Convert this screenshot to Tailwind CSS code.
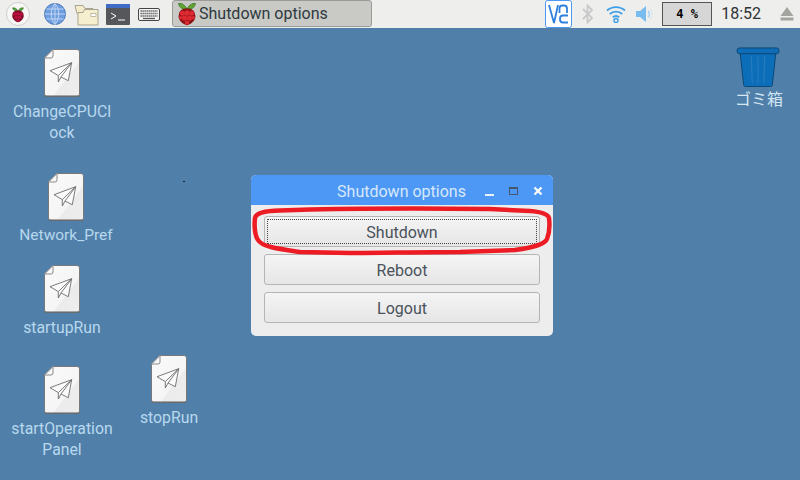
<!DOCTYPE html>
<html lang="ja">
<head>
    <meta charset="UTF-8">
    <title>Shutdown options</title>
    <script src="https://cdn.jsdelivr.net/npm/@tailwindcss/browser@4"></script>
</head>
<body class="w-[800px] h-[480px] overflow-hidden flex flex-col bg-[#5080aa] font-['Roboto','Noto_Sans_CJK_JP',sans-serif]">
    <!-- hidden symbols -->
    <svg width="0" height="0" class="absolute">
        <defs>
            <linearGradient id="pageFill" x1="0" y1="0" x2="1" y2="1">
                <stop offset="0" stop-color="#fafafa"/>
                <stop offset="0.62" stop-color="#f5f5f5"/>
                <stop offset="0.63" stop-color="#ebebeb"/>
                <stop offset="1" stop-color="#eeeeee"/>
            </linearGradient>
            <symbol id="script-icon" viewBox="0 0 36 48">
                <path d="M9 .5H33a2.500 2.500 0 0 1 2.500 2.500V45a2.500 2.500 0 0 1-2.500 2.500H3A2.500 2.500 0 0 1 .5 45V9Z" fill="url(#pageFill)" stroke="#77797b"/>
                <path d="M.5 47h35" stroke="#5c5e60" stroke-width="1"/>
                <path d="M.5 9H7a2 2 0 0 0 2-2V.5Z" fill="#f7f7f7" stroke="#8a8a8a"/>
                <path d="M6 21.700 27.700 13.700 24.300 31.700 17 28 14.300 33 14.300 26.600Z M14.300 26.600 27.700 13.700 17 28" fill="#fbfbfb" stroke="#6c6c6c" stroke-width=".9" stroke-linejoin="round"/>
            </symbol>
            <symbol id="raspberry" viewBox="0 0 20 24">
                <path d="M10 7C8 3 5 1 1.500 1.500 2.500 6 6 8 10 7Z M10 7C12 3 15 1 18.500 1.500 17.500 6 14 8 10 7Z" fill="#5fa52f" stroke="#2c6a17" stroke-width=".7"/>
                <path d="M10 6.500C14 6 18 8.500 18 12.500 19.500 15.500 17 20 13 22 11 23.500 9 23.500 7 22 3 20 .5 15.500 2 12.500 2 8.500 6 6 10 6.500Z" fill="#8e1218"/>
                <g fill="#dc2a30"><circle cx="10" cy="11" r="2.700"/><circle cx="5.300" cy="11.200" r="2.500"/><circle cx="14.700" cy="11.200" r="2.500"/><circle cx="7.500" cy="16" r="2.600"/><circle cx="12.500" cy="16" r="2.600"/><circle cx="10" cy="20.700" r="2.100"/><circle cx="3.700" cy="15.800" r="1.700"/><circle cx="16.300" cy="15.800" r="1.700"/></g>
            </symbol>
            <symbol id="raspberry-dark" viewBox="0 0 20 24">
                <path d="M10 7C8 3 5 1.500 2 2.500 3 6 6 8 10 7Z M10 7C12 3 15 1.500 18 2.500 17 6 14 8 10 7Z" fill="#4f9a3a" stroke="#2f6b18" stroke-width=".6"/>
                <path d="M10 6.500C14 6 18 8.500 18 12.500 19 15.500 17 20 13 22 11 23.500 9 23.500 7 22 3 20 1 15.500 2 12.500 2 8.500 6 6 10 6.500Z" fill="#7f0d2c"/>
                <g fill="#b8123c"><circle cx="10" cy="11" r="2.600"/><circle cx="5.500" cy="11.500" r="2.400"/><circle cx="14.500" cy="11.500" r="2.400"/><circle cx="7.500" cy="16" r="2.500"/><circle cx="12.500" cy="16" r="2.500"/><circle cx="10" cy="20.500" r="2"/></g>
            </symbol>
        </defs>
    </svg>

    <!-- panel -->
    <header class="h-[28px] shrink-0 bg-[#eeeeec] flex items-center text-[#2e3436]">
        <div class="flex items-center w-[172px] shrink-0">
            <div class="ml-[6px] w-[24px] h-[24px] rounded-full bg-[#f7f7f5] border border-[#cfcfcf] flex items-center justify-center">
                <svg width="14" height="17" class="block"><use href="#raspberry-dark"/></svg>
            </div>
            <svg class="ml-[14px] block" width="22" height="22" viewBox="0 0 22 22">
                <circle cx="11" cy="11" r="10.500" fill="#6f9fe0" stroke="#4a78b8"/>
                <path d="M.5 11H21.500M2.500 6H19.500M2.500 16H19.500M11 .5V21.500M11 .5C6 6 6 16 11 21.500M11 .5C16 6 16 16 11 21.500" fill="none" stroke="#cfe0f6" stroke-width=".8"/>
            </svg>
            <svg class="ml-[8px] block" width="25" height="23" viewBox="0 0 25 23">
                <path d="M1 2.500h8l2 3h8v5H3Z" fill="#f4ecca" stroke="#a9a48f"/>
                <path d="M4 9.500h5l1.500-3H24V22H4Z" fill="#f6efcf" stroke="#a9a48f"/>
                <rect x="17" y="10.500" width="5" height="3" fill="#fff" stroke="#a9a48f" stroke-width=".7"/>
            </svg>
            <svg class="ml-[7px] block" width="24" height="21" viewBox="0 0 24 21">
                <rect width="24" height="21" rx="1" fill="#55575a"/>
                <rect width="24" height="4" fill="#3f6cc4"/>
                <path d="M5 9l5 3-5 3" fill="none" stroke="#fff"/>
                <path d="M12 16h7" stroke="#fff"/>
            </svg>
            <svg class="ml-[8px] block" width="22" height="13" viewBox="0 0 22 13">
                <rect x=".5" y=".5" width="21" height="12" rx="1.500" fill="#f3f3f3" stroke="#444"/>
                <path d="M2.500 3h17M2.500 5.500h17M2.500 8h17" stroke="#555" stroke-width="1.300" stroke-dasharray="1.300 .7"/>
                <path d="M5 10.500h12" stroke="#555" stroke-width="1.300"/>
            </svg>
        </div>
        <div class="w-[200px] h-[27px] mt-[-1px] flex items-center rounded-[3px] border border-[#9a9a96] bg-[#c9c9c5] text-[16px] text-[#2e3a40]">
            <svg width="20" height="24" class="ml-[4px] block shrink-0"><use href="#raspberry"/></svg>
            <span class="ml-[2px] whitespace-nowrap">Shutdown options</span>
        </div>
        <div class="ml-auto flex items-center">
            <svg class="block" width="28" height="28" viewBox="0 0 28 28">
                <rect x=".5" y=".5" width="26" height="27" rx="2" fill="#fff" stroke="#4d98f5"/>
                <path d="M4 5l5 18 4-18" fill="none" stroke="#2f7fe0" stroke-width="1.800"/>
                <path d="M14.500 13V8.500a3 3 0 0 1 3-3h1.500a3 3 0 0 1 3 3V13" fill="none" stroke="#2f7fe0" stroke-width="1.800"/>
                <path d="M23 15.500h-5a3 3 0 0 0-3 3v1a3 3 0 0 0 3 3h5" fill="none" stroke="#2f7fe0" stroke-width="1.800"/>
            </svg>
            <svg class="ml-[9px] block" width="12" height="20" viewBox="0 0 12 20">
                <path d="M1 5l9 9-4.500 4.500V1.500L10 6 1 15" fill="none" stroke="#c9c9c9" stroke-width="1.800"/>
            </svg>
            <svg class="ml-[12px] block mt-[-1px]" width="20" height="18" viewBox="0 0 20 18">
                <path d="M1 5.500a13.500 13.500 0 0 1 18 0M3.800 9a9.500 9.500 0 0 1 12.400 0M6.800 12.300a5 5 0 0 1 6.400 0" fill="none" stroke="#3f9fe8" stroke-width="1.800"/>
                <circle cx="10" cy="15.500" r="2" fill="none" stroke="#3f9fe8" stroke-width="1.500"/>
            </svg>
            <svg class="ml-[10px] block" width="18" height="16" viewBox="0 0 18 16">
                <path d="M0 5h4l6-5v16l-6-5H0Z" fill="#79bcf0"/>
                <path d="M12 5a4 4 0 0 1 0 6" fill="none" stroke="#9bcdf3" stroke-width="1.200"/>
                <path d="M14 3a7 7 0 0 1 0 10" fill="none" stroke="#dbe6ee" stroke-width="1.200"/>
            </svg>
            <div class="ml-[8px] w-[50px] h-[24px] border border-[#555] bg-[#d6d6d6] flex items-center justify-center text-[12px] font-['DejaVu_Sans_Mono',monospace] text-black whitespace-pre font-bold">4 %</div>
            <span class="ml-[9px] text-[16px] text-[#2e3436]">18:52</span>
            <svg class="ml-[19px] mr-[6px] block" width="14" height="14" viewBox="0 0 14 14">
                <path d="M7 0l6.500 9H.500Z" fill="#a3a39f"/>
                <rect x=".5" y="10.500" width="13" height="3" fill="#a3a39f"/>
            </svg>
        </div>
    </header>

    <!-- desktop -->
    <main class="relative flex-1">
        <div class="absolute left-[2px] top-[21px] w-[120px] flex flex-col items-center text-center">
            <svg width="36" height="48" class="block"><use href="#script-icon"/></svg>
            <p class="mt-[4px] text-[15.800px] leading-[21px] text-[#b8d8ee] [overflow-wrap:anywhere] w-[104px]">ChangeCPUClock</p>
        </div>
        <div class="absolute left-[6px] top-[145px] w-[120px] flex flex-col items-center text-center">
            <svg width="36" height="48" class="block"><use href="#script-icon"/></svg>
            <p class="mt-[4px] text-[15.500px] leading-[21px] text-[#b8d8ee]">Network_Pref</p>
        </div>
        <div class="absolute left-[2px] top-[237px] w-[120px] flex flex-col items-center text-center">
            <svg width="36" height="48" class="block"><use href="#script-icon"/></svg>
            <p class="mt-[4px] text-[15.800px] leading-[21px] text-[#b8d8ee]">startupRun</p>
        </div>
        <div class="absolute left-[2px] top-[338px] w-[120px] flex flex-col items-center text-center">
            <svg width="36" height="48" class="block"><use href="#script-icon"/></svg>
            <p class="mt-[4px] text-[15.800px] leading-[21px] text-[#b8d8ee] w-[104px]">startOperation Panel</p>
        </div>
        <div class="absolute left-[109px] top-[327px] w-[120px] flex flex-col items-center text-center">
            <svg width="36" height="48" class="block"><use href="#script-icon"/></svg>
            <p class="mt-[4px] text-[15.800px] leading-[21px] text-[#b8d8ee]">stopRun</p>
        </div>
        <div class="absolute left-[729px] top-[19px] w-[60px] flex flex-col items-center text-center">
            <svg class="block mr-[2px]" width="44" height="40" viewBox="0 0 46 42">
                <path d="M4 4H42L38 40a2 2 0 0 1-2 1.500H10A2 2 0 0 1 8 40Z" fill="#0c6db9" stroke="#0b4674"/>
                <path d="M16 10l1 28M23 10v28M30 10l-1 28" stroke="#2a80c2" fill="none"/>
                <rect x="1" y="1" width="44" height="6" rx="2.500" fill="#0f6cb6" stroke="#0b4674"/>
            </svg>
            <p class="mt-[3px] text-[16px] leading-[20px] text-[#d4e6f2] whitespace-nowrap">ゴミ箱</p>
        </div>
        <span class="absolute left-[183px] top-[153px] w-[2px] h-[1px] bg-[#222]"></span>

        <!-- window -->
        <section class="absolute left-[251px] top-[147px] w-[302px] h-[161px] rounded-[5px] overflow-hidden bg-[#ededed] flex flex-col">
            <div class="relative h-[30px] shrink-0 bg-[#4d98f5] flex items-center justify-center pr-[1px] pt-[3px] text-[16px] text-[#d8e8fb]">
                <span>Shutdown options</span>
                <div class="absolute right-[10px] top-[0px] h-[30px] flex items-center gap-[13px]">
                    <span class="w-[9px] h-[2px] mt-[10px] mr-[2px] bg-[#e8f2fd]"></span>
                    <span class="w-[9px] h-[8px] mt-[2px] mr-[2px] border border-[#45566e] border-t-2"></span>
                    <svg width="10" height="10" viewBox="0 0 10 10" class="block mt-[2px]"><path d="M1.500 1.500l7 7M8.500 1.500l-7 7" stroke="#fff" stroke-width="2.200"/></svg>
                </div>
            </div>
            <div class="flex flex-col gap-[7px] pt-[11px] px-[13px]">
                <button class="relative h-[31px] pt-[2px] rounded-[3px] border border-[#b5b5b3] bg-gradient-to-b from-[#f4f4f4] to-[#e6e6e6] text-[16px] text-[#4a525b]">
                    <span class="absolute inset-[2px] border border-dotted border-[#444]"></span>
                    Shutdown
                </button>
                <button class="h-[31px] pt-[2px] rounded-[3px] border border-[#b5b5b3] bg-gradient-to-b from-[#f4f4f4] to-[#e6e6e6] text-[16px] text-[#4a525b]">Reboot</button>
                <button class="h-[31px] pt-[2px] rounded-[3px] border border-[#b5b5b3] bg-gradient-to-b from-[#f4f4f4] to-[#e6e6e6] text-[16px] text-[#4a525b]">Logout</button>
            </div>
        </section>

        <!-- red hand-drawn oval over the first button -->
        <svg class="absolute left-[250px] top-[178px] block" width="306" height="52" viewBox="0 0 306 52">
            <path d="M5 12C6 7 14 5 30 4.500L60 3.500C110 2.500 200 2.500 240 3L280 5C292 6 298 8 299 12 300 20 299 28 297 33 295 38 285 41 265 44L210 46C170 46 130 47 100 47L50 46C30 43 12 41 8 34 5 30 4 20 5 12Z" fill="none" stroke="#ed1c24" stroke-width="4.500"/>
        </svg>
    </main>
</body>
</html>
